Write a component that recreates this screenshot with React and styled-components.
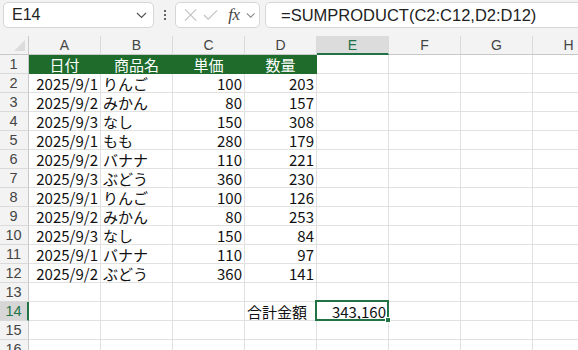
import React from 'react';
import styled, { createGlobalStyle } from 'styled-components';

const GREEN = '#1e6b2c';
const SEL = '#217346';

const Global = createGlobalStyle`
  html, body { margin: 0; padding: 0; background: #fff; }
  body { font-family: "Noto Sans CJK JP", "Noto Sans", sans-serif; overflow: hidden; }
`;

const Page = styled.div`
  width: 578px;
  height: 350px;
  overflow: hidden;
  background: #fff;
`;

const Toolbar = styled.div`
  display: flex;
  align-items: flex-start;
  height: 36px;
  box-sizing: border-box;
  padding: 2px 0 0 3px;
  background: #f3f3f3;
`;

const Box = styled.div`
  box-sizing: border-box;
  height: 26px;
  background: #fff;
  border: 1px solid #d6d6d6;
  border-radius: 5px;
  display: flex;
  align-items: center;
  flex: none;
`;

const NameBox = styled(Box)`
  width: 151px;
  padding: 0 6px 0 8px;
  justify-content: space-between;
  font-family: "Liberation Sans", "Noto Sans", sans-serif;
  font-size: 16px;
  color: #222;
`;

const Dots = styled.div`
  width: 21px;
  height: 26px;
  display: flex;
  flex-direction: column;
  align-items: center;
  justify-content: center;
  gap: 2px;
  flex: none;
  span {
    width: 2px;
    height: 2px;
    border-radius: 1px;
    background: #333;
  }
`;

const FuncBox = styled(Box)`
  width: 85px;
  padding: 0 4px 0 8px;
  gap: 6px;
`;

const Fx = styled.span`
  font-family: "Liberation Serif", "DejaVu Serif", serif;
  font-style: italic;
  font-size: 17px;
  color: #444;
  margin-left: 4px;
  letter-spacing: -0.5px;
`;

const FormulaBox = styled(Box)`
  width: 340px;
  margin-left: 5px;
  padding-left: 15px;
  font-family: "Liberation Sans", "Noto Sans", sans-serif;
  font-size: 16.5px;
  color: #222;
`;

const Sheet = styled.div`
  display: grid;
  grid-template-columns: 29px repeat(8, 72px);
  grid-auto-rows: 19px;
  font-size: 15px;
`;

const Corner = styled.div`
  box-sizing: border-box;
  background: #f3f3f3;
  border-right: 1px solid #c8c8c8;
  border-bottom: 1px solid #c8c8c8;
  position: relative;
  svg { position: absolute; right: 3px; bottom: 3px; }
`;

const ColHead = styled.div`
  box-sizing: border-box;
  background: ${p => (p.$active ? '#dcdcdc' : '#f3f3f3')};
  color: ${p => (p.$active ? SEL : '#444')};
  border-right: 1px solid #dadada;
  border-bottom: ${p => (p.$active ? `2px solid ${SEL}` : '1px solid #c8c8c8')};
  font-family: "Liberation Sans", "Noto Sans", sans-serif;
  font-size: 14px;
  display: flex;
  align-items: center;
  justify-content: center;
  padding-top: ${p => (p.$active ? '1px' : '0')};
`;

const RowHead = styled.div`
  box-sizing: border-box;
  background: ${p => (p.$active ? '#d6d6d6' : '#f3f3f3')};
  color: ${p => (p.$active ? SEL : '#444')};
  border-right: ${p => (p.$active ? `2px solid ${SEL}` : '1px solid #c8c8c8')};
  border-bottom: 1px solid #dadada;
  font-family: "Liberation Sans", "Noto Sans", sans-serif;
  font-size: 14.5px;
  display: flex;
  align-items: center;
  justify-content: center;
  padding-right: ${p => (p.$active ? '0' : '1px')};
`;

const Cell = styled.div`
  box-sizing: border-box;
  position: relative;
  background: ${p => (p.$fill ? GREEN : '#fff')};
  color: ${p => (p.$fill ? '#fff' : '#111')};
  border-right: 1px solid ${p => (p.$fill ? GREEN : '#e1e1e1')};
  border-bottom: 1px solid ${p => (p.$fill ? GREEN : '#e1e1e1')};
  display: flex;
  align-items: center;
  justify-content: ${p =>
    p.$align === 'right' ? 'flex-end' : p.$align === 'center' ? 'center' : 'flex-start'};
  padding: 0 2px 0 2px;
  white-space: nowrap;
  overflow: visible;
  line-height: 1;
  z-index: ${p => (p.$selected ? 2 : 'auto')};
`;

const SelFrame = styled.div`
  position: absolute;
  left: -2px;
  top: -2px;
  right: -1px;
  bottom: -1px;
  border: 2px solid ${SEL};
  pointer-events: none;
`;

const Handle = styled.div`
  position: absolute;
  right: -4px;
  bottom: -4px;
  width: 6px;
  height: 6px;
  background: ${SEL};
  border: 1px solid #fff;
  box-sizing: border-box;
`;

const Chevron = ({ color = '#555', w = 11 }) => (
  <svg width={w} height="7" viewBox="0 0 11 7">
    <path d="M1 1 L5.5 5.5 L10 1" fill="none" stroke={color} strokeWidth="1.2" />
  </svg>
);

const CloseIcon = () => (
  <svg width="14" height="14" viewBox="0 0 14 14">
    <path d="M1 1 L13 13 M13 1 L1 13" stroke="#c2c2c2" strokeWidth="1.2" />
  </svg>
);

const CheckIcon = () => (
  <svg width="16" height="12" viewBox="0 0 16 12">
    <path d="M1 6 L5.5 10.5 L15 1" fill="none" stroke="#c2c2c2" strokeWidth="1.2" />
  </svg>
);

const COLS = ['A', 'B', 'C', 'D', 'E', 'F', 'G', 'H'];

const data = [
  ['2025/9/1', 'りんご', 100, 203],
  ['2025/9/2', 'みかん', 80, 157],
  ['2025/9/3', 'なし', 150, 308],
  ['2025/9/1', 'もも', 280, 179],
  ['2025/9/2', 'バナナ', 110, 221],
  ['2025/9/3', 'ぶどう', 360, 230],
  ['2025/9/1', 'りんご', 100, 126],
  ['2025/9/2', 'みかん', 80, 253],
  ['2025/9/3', 'なし', 150, 84],
  ['2025/9/1', 'バナナ', 110, 97],
  ['2025/9/2', 'ぶどう', 360, 141],
];

const headers = ['日付', '商品名', '単価', '数量'];

function buildRows() {
  const rows = [];
  rows.push(COLS.map((c, i) => (i < 4 ? { v: headers[i], fill: true, align: 'center' } : {})));
  data.forEach(r => {
    rows.push(
      COLS.map((c, i) => {
        if (i === 0) return { v: r[0], align: 'right' };
        if (i === 1) return { v: r[1], align: 'left' };
        if (i === 2 || i === 3) return { v: r[i], align: 'right' };
        return {};
      })
    );
  });
  rows.push(COLS.map(() => ({})));
  rows.push(
    COLS.map((c, i) => {
      if (i === 3) return { v: '合計金額', align: 'left' };
      if (i === 4) return { v: '343,160', align: 'right', selected: true };
      return {};
    })
  );
  rows.push(COLS.map(() => ({})));
  rows.push(COLS.map(() => ({})));
  return rows;
}

export default function App() {
  const rows = buildRows();
  return (
    <Page>
      <Global />
      <Toolbar>
        <NameBox>
          <span>E14</span>
          <Chevron />
        </NameBox>
        <Dots>
          <span />
          <span />
          <span />
        </Dots>
        <FuncBox>
          <CloseIcon />
          <CheckIcon />
          <Fx>fx</Fx>
          <Chevron color="#888" w={10} />
        </FuncBox>
        <FormulaBox>=SUMPRODUCT(C2:C12,D2:D12)</FormulaBox>
      </Toolbar>
      <Sheet>
        <Corner>
          <svg width="11" height="11" viewBox="0 0 11 11">
            <path d="M11 0 L11 11 L0 11 Z" fill="#dcdcdc" />
          </svg>
        </Corner>
        {COLS.map(c => (
          <ColHead key={c} $active={c === 'E'}>
            {c}
          </ColHead>
        ))}
        {rows.map((row, ri) => (
          <React.Fragment key={ri}>
            <RowHead $active={ri + 1 === 14}>{ri + 1}</RowHead>
            {row.map((cell, ci) => (
              <Cell
                key={ci}
                $fill={cell.fill}
                $align={cell.align}
                $selected={cell.selected}
              >
                {cell.v}
                {cell.selected && (
                  <SelFrame>
                    <Handle />
                  </SelFrame>
                )}
              </Cell>
            ))}
          </React.Fragment>
        ))}
      </Sheet>
    </Page>
  );
}
